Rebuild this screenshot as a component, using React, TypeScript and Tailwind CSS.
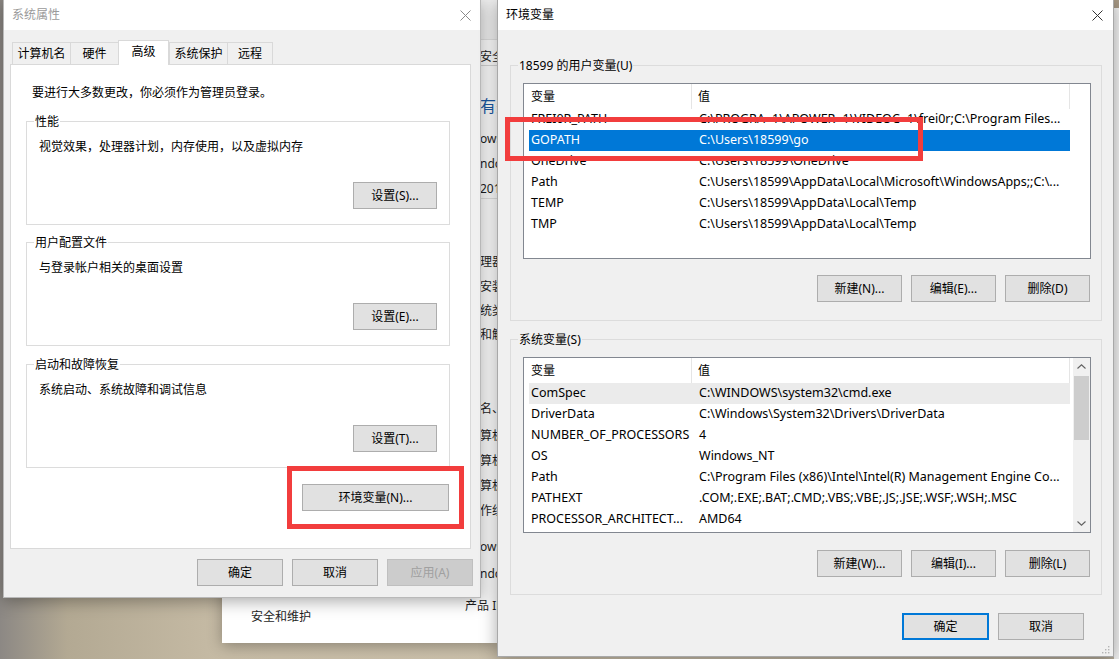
import React from "react";

type Row = { name: string; value: string; state?: "sel" | "hot" };

const userVars: Row[] = [
  { name: "FREI0R_PATH", value: "C:\\PROGRA~1\\APOWER~1\\VIDEOC~1\\frei0r;C:\\Program Files..." },
  { name: "GOPATH", value: "C:\\Users\\18599\\go", state: "sel" },
  { name: "OneDrive", value: "C:\\Users\\18599\\OneDrive" },
  { name: "Path", value: "C:\\Users\\18599\\AppData\\Local\\Microsoft\\WindowsApps;;C:\\..." },
  { name: "TEMP", value: "C:\\Users\\18599\\AppData\\Local\\Temp" },
  { name: "TMP", value: "C:\\Users\\18599\\AppData\\Local\\Temp" },
];

const sysVars: Row[] = [
  { name: "ComSpec", value: "C:\\WINDOWS\\system32\\cmd.exe", state: "hot" },
  { name: "DriverData", value: "C:\\Windows\\System32\\Drivers\\DriverData" },
  { name: "NUMBER_OF_PROCESSORS", value: "4" },
  { name: "OS", value: "Windows_NT" },
  { name: "Path", value: "C:\\Program Files (x86)\\Intel\\Intel(R) Management Engine Co..." },
  { name: "PATHEXT", value: ".COM;.EXE;.BAT;.CMD;.VBS;.VBE;.JS;.JSE;.WSF;.WSH;.MSC" },
  { name: "PROCESSOR_ARCHITECT...", value: "AMD64" },
];

const tabs = [
  { label: "计算机名", w: "w-[58px]" },
  { label: "硬件", w: "w-[48px]" },
  { label: "高级", w: "w-[51px]", active: true },
  { label: "系统保护", w: "w-[58px]" },
  { label: "远程", w: "w-[46px] border-r" },
];

function CloseIcon({ className }: { className: string }) {
  return (
    <svg width="11" height="11" viewBox="0 0 11 11" className={className}>
      <path d="M0.5 0.5L10.5 10.5M10.5 0.5L0.5 10.5" stroke="currentColor" strokeWidth="1" fill="none" />
    </svg>
  );
}

function Btn({
  children,
  className = "",
  disabled,
  focused,
}: {
  children: React.ReactNode;
  className?: string;
  disabled?: boolean;
  focused?: boolean;
}) {
  const look = disabled
    ? "bg-[#cccccc] border border-[#bfbfbf] text-[#a0a0a0]"
    : focused
    ? "bg-[#e1e1e1] border-2 border-[#0078d7] text-black"
    : "bg-[#e1e1e1] border border-[#adadad] text-black";
  return (
    <div className={`flex items-center justify-center h-[27px] shrink-0 text-[12px] leading-4 ${look} ${className}`}>
      {children}
    </div>
  );
}

function Group({
  label,
  bg,
  className,
  children,
}: {
  label: string;
  bg: string;
  className: string;
  children: React.ReactNode;
}) {
  return (
    <div className={`relative border border-[#dcdcdc] flex flex-col shrink-0 ${className}`}>
      <span className={`absolute left-[7px] -top-[8px] px-[1px] leading-4 text-[12px] ${bg}`}>{label}</span>
      {children}
    </div>
  );
}

function Scrollbar() {
  return (
    <div className="w-[17px] shrink-0 bg-[#f0f0f0] flex flex-col">
      <div className="h-[17px] flex items-center justify-center text-[#606060]">
        <svg width="9" height="5" viewBox="0 0 9 5">
          <path d="M0.5 4.5L4.5 0.8L8.5 4.5" stroke="currentColor" strokeWidth="1.1" fill="none" />
        </svg>
      </div>
      <div className="flex-1">
        <div className="mx-[1px] mt-px h-[64px] bg-[#cdcdcd]" />
      </div>
      <div className="h-[17px] flex items-center justify-center text-[#606060]">
        <svg width="9" height="5" viewBox="0 0 9 5">
          <path d="M0.5 0.5L4.5 4.2L8.5 0.5" stroke="currentColor" strokeWidth="1.1" fill="none" />
        </svg>
      </div>
    </div>
  );
}

function ListView({ rows, scroll }: { rows: Row[]; scroll?: boolean }) {
  return (
    <div className="flex h-[176px] w-[568px] ml-[12px] mt-[17px] shrink-0 border border-[#828790] bg-white overflow-hidden">
      <div className="flex-1 min-w-0 flex flex-col">
        <div className="flex h-[25px] shrink-0 text-[12px]">
          <div className="w-[168px] shrink-0 border-r border-[#e5e5e5] pl-[7px] flex items-center">变量</div>
          <div className="w-[378px] shrink-0 border-r border-[#e5e5e5] pl-[6px] flex items-center">值</div>
        </div>
        <div className="pl-[5px] flex flex-col">
          {rows.map((r) => (
            <div
              key={r.name + r.value}
              className={`flex h-[21px] w-[541px] shrink-0 items-center text-[12.5px] whitespace-nowrap ${
                r.state === "sel" ? "bg-[#0078d7] text-white" : r.state === "hot" ? "bg-[#ebebeb]" : ""
              }`}
            >
              <div className="w-[168px] shrink-0 pl-[2px] overflow-hidden">{r.name}</div>
              <div className="flex-1 pl-[2px] overflow-hidden">{r.value}</div>
            </div>
          ))}
        </div>
      </div>
      {scroll && <Scrollbar />}
    </div>
  );
}

function PerfGroup({ label, text, btn, mt }: { label: string; text: string; btn: string; mt: string }) {
  return (
    <Group label={label} bg="bg-white" className={`ml-[15px] w-[424px] h-[104px] ${mt}`}>
      <div className="pl-[12px] pt-[17px] leading-4 text-[12px]">{text}</div>
      <div className="flex justify-end pr-[12px] mt-[27px]">
        <Btn className="w-[84px]">{btn}</Btn>
      </div>
    </Group>
  );
}

function SystemProps() {
  return (
    <div className="absolute left-[3px] top-[-1px] w-[478px] h-[599px] bg-[#f0f0f0] border border-[#b9b9b9] shadow-[0_3px_16px_rgba(0,0,0,0.35)] flex flex-col">
      <div className="h-[30px] shrink-0 bg-white flex items-center justify-between pl-[8px] pr-[9px]">
        <span className="text-[12px] text-[#9a9a9a]">系统属性</span>
        <CloseIcon className="text-[#8a8a8a]" />
      </div>
      <div className="px-[6px] pt-[10px] flex flex-col">
        <div className="flex items-end h-[24px] ml-[2px]">
          {tabs.map((t) =>
            t.active ? (
              <div
                key={t.label}
                className={`relative z-10 h-[25px] -mb-px bg-white border-t border-x border-[#d9d9d9] flex justify-center pt-[3px] text-[12px] leading-4 ${t.w}`}
              >
                {t.label}
              </div>
            ) : (
              <div
                key={t.label}
                className={`h-[22px] bg-[#f0f0f0] border-t border-l border-[#d9d9d9] flex items-center justify-center text-[12px] leading-4 ${t.w}`}
              >
                {t.label}
              </div>
            )
          )}
        </div>
        <div className="w-[461px] h-[485px] bg-white border border-[#d9d9d9] flex flex-col">
          <div className="pl-[21px] pt-[20px] leading-4 text-[12px]">要进行大多数更改，你必须作为管理员登录。</div>
          <PerfGroup label="性能" text="视觉效果，处理器计划，内存使用，以及虚拟内存" btn="设置(S)..." mt="mt-[20px]" />
          <PerfGroup label="用户配置文件" text="与登录帐户相关的桌面设置" btn="设置(E)..." mt="mt-[17px]" />
          <PerfGroup label="启动和故障恢复" text="系统启动、系统故障和调试信息" btn="设置(T)..." mt="mt-[18px]" />
          <div className="flex justify-end pr-[21px] mt-[16px]">
            <Btn className="w-[147px]">环境变量(N)...</Btn>
          </div>
        </div>
        <div className="flex justify-end gap-[9px] mt-[10px] pr-[1px]">
          <Btn className="w-[86px]">确定</Btn>
          <Btn className="w-[86px]">取消</Btn>
          <Btn className="w-[86px]" disabled>
            应用(A)
          </Btn>
        </div>
      </div>
    </div>
  );
}

function EnvVars() {
  return (
    <div className="absolute left-[497px] top-[-1px] w-[617px] h-[658px] bg-[#f0f0f0] border border-[#a8a8a8] shadow-[0_3px_16px_rgba(0,0,0,0.35)] flex flex-col">
      <div className="h-[30px] shrink-0 bg-white flex items-center justify-between pl-[8px] pr-[10px]">
        <span className="text-[12px] text-black">环境变量</span>
        <CloseIcon className="text-[#333333]" />
      </div>
      <div className="flex flex-col pl-[12px]">
        <Group label="18599 的用户变量(U)" bg="bg-[#f0f0f0]" className="mt-[35px] w-[592px] h-[256px]">
          <ListView rows={userVars} />
          <div className="flex justify-end gap-[9px] pr-[11px] mt-[16px]">
            <Btn className="w-[85px]">新建(N)...</Btn>
            <Btn className="w-[85px]">编辑(E)...</Btn>
            <Btn className="w-[85px]">删除(D)</Btn>
          </div>
        </Group>
        <Group label="系统变量(S)" bg="bg-[#f0f0f0]" className="mt-[18px] w-[592px] h-[256px]">
          <ListView rows={sysVars} scroll />
          <div className="flex justify-end gap-[9px] pr-[11px] mt-[17px]">
            <Btn className="w-[85px]">新建(W)...</Btn>
            <Btn className="w-[85px]">编辑(I)...</Btn>
            <Btn className="w-[85px]">删除(L)</Btn>
          </div>
        </Group>
      </div>
      <div className="flex justify-end gap-[9px] pr-[29px] mt-[18px]">
        <Btn className="w-[87px]" focused>
          确定
        </Btn>
        <Btn className="w-[86px]">取消</Btn>
      </div>
      <div className="flex justify-end pr-[3px] mt-auto pb-[2px]">
        <svg width="10" height="10" viewBox="0 0 10 10" className="text-[#b4b4b4]">
          <g fill="currentColor">
            <rect x="8" y="2" width="1.4" height="1.4" />
            <rect x="5" y="5" width="1.4" height="1.4" />
            <rect x="8" y="5" width="1.4" height="1.4" />
            <rect x="2" y="8" width="1.4" height="1.4" />
            <rect x="5" y="8" width="1.4" height="1.4" />
            <rect x="8" y="8" width="1.4" height="1.4" />
          </g>
        </svg>
      </div>
    </div>
  );
}

function ControlPanel() {
  const frag = "pl-[258px] leading-4 text-[12px] whitespace-nowrap";
  return (
    <div className="absolute left-[222px] top-0 w-[276px] h-[643px] bg-white overflow-hidden shadow-[0_3px_14px_rgba(0,0,0,0.3)] flex flex-col text-[#1e1e1e]">
      <div className="h-[40px] shrink-0 bg-[#f2f2f2] border-b border-[#e3e3e3]" />
      <div className={`h-[26px] shrink-0 pt-[9px] border-b border-[#d8d8d8] ${frag}`}>安全和维护</div>
      <div className="pl-[258px] mt-[29px] text-[16px] leading-[22px] text-[#1a5aa6] whitespace-nowrap">有关 Windows</div>
      <div className={`mt-[14px] ${frag}`}>ows 版本</div>
      <div className={`mt-[9px] ${frag}`}>ndows 10 家庭中文版</div>
      <div className={`mt-[9px] ${frag}`}>2019 Microsoft</div>
      <div className="mt-[1px] h-px bg-[#e2e2e2] shrink-0" />
      <div className={`mt-[55px] ${frag}`}>理器：</div>
      <div className={`mt-[9px] ${frag}`}>安装的内存</div>
      <div className={`mt-[8px] ${frag}`}>统类型：</div>
      <div className={`mt-[8px] ${frag}`}>和触控：</div>
      <div className={`mt-[58px] ${frag}`}>名、域和工作组设置</div>
      <div className={`mt-[11px] ${frag}`}>算机名：</div>
      <div className={`mt-[9px] ${frag}`}>算机全名：</div>
      <div className={`mt-[9px] ${frag}`}>算机描述：</div>
      <div className={`mt-[9px] ${frag}`}>作组：</div>
      <div className={`mt-[20px] ${frag}`}>ows 激活</div>
      <div className={`mt-[11px] ${frag}`}>ndows 已激活</div>
      <div className="flex items-start mt-[16px] text-[12px] leading-4 whitespace-nowrap">
        <span className="ml-[29px] mt-[11px]">安全和维护</span>
        <span className="ml-[154px]">产品 ID：</span>
      </div>
    </div>
  );
}

export default function App() {
  return (
    <div className="relative w-[1119px] h-[659px] overflow-hidden font-['Noto_Sans','Noto_Sans_CJK_SC',sans-serif] text-black bg-[linear-gradient(90deg,#8c8884_0%,#b3a993_6%,#c6bba5_20%,#cdc2ad_55%,#c2b8a5_80%,#b8ae9c_100%)]">
      <div className="absolute left-[1114px] top-0 w-[5px] h-[659px] bg-[#f3f3f3] border-t-[8px] border-[#a89a86]" />
      <ControlPanel />
      <SystemProps />
      <EnvVars />
      {/* red annotation boxes */}
      <div className="absolute left-[287px] top-[466px] w-[177px] h-[63px] border-[5px] border-[#f23d3d]" />
      <div className="absolute left-[505px] top-[117px] w-[418px] h-[44px] border-[5px] border-[#f23d3d]" />
    </div>
  );
}
